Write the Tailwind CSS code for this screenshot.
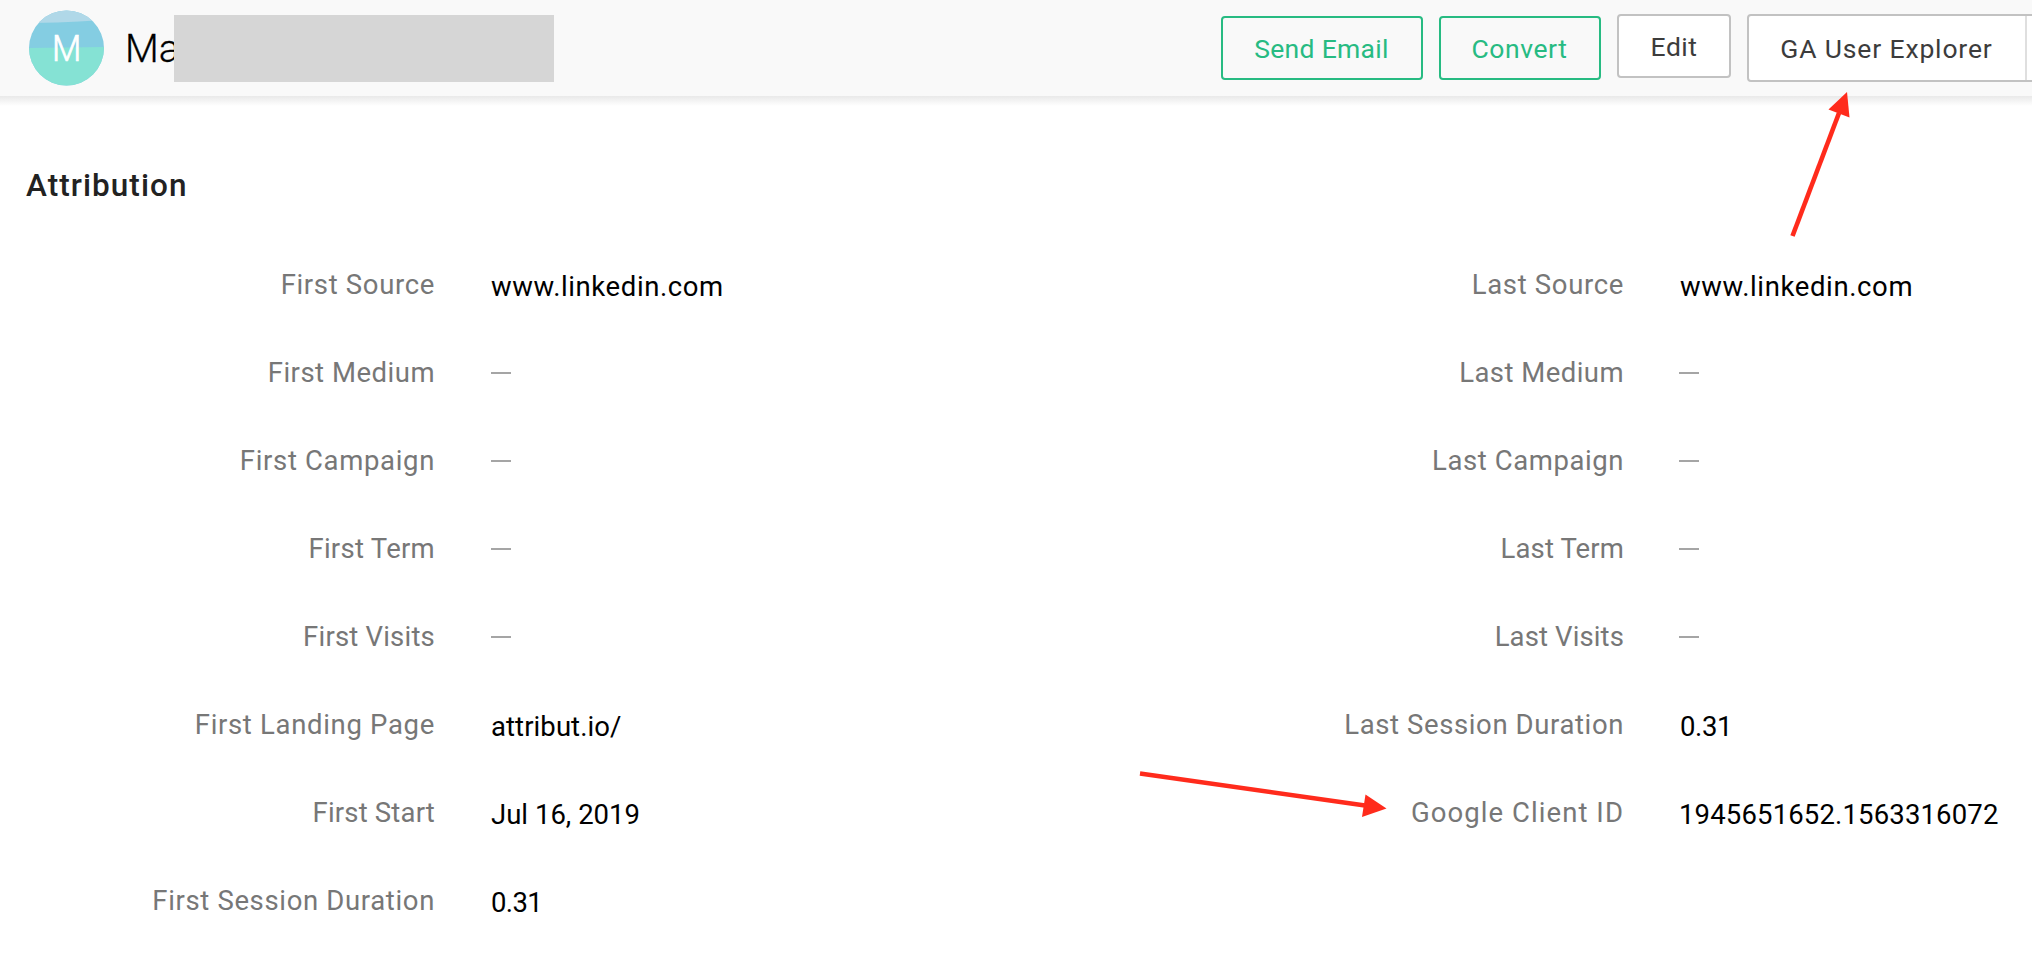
<!DOCTYPE html>
<html lang="en">
<head>
<meta charset="utf-8">
<title>Attribution</title>
<script src="https://cdn.jsdelivr.net/npm/@tailwindcss/browser@4"></script>
</head>
<body class="relative h-[963px] w-[2032px] overflow-hidden bg-white font-['Roboto','Liberation_Sans',sans-serif] text-[27.5px] text-black">

<header class="flex h-24 items-start bg-[#f9f9f9] pl-[29px]">
  <div class="relative mt-[10px] mr-px h-19 w-[75px] shrink-0">
    <svg class="h-19 w-[75px]" viewBox="0 0 75 76">
      <defs><clipPath id="disc"><circle cx="37.5" cy="38" r="37.5"/></clipPath></defs>
      <g clip-path="url(#disc)">
        <rect width="76" height="76" fill="#84cde2"/>
        <path d="M0 0H76V10L50 11.5L28 12.5L0 13Z" fill="#b0d8e8"/>
        <path d="M0 38L38 37.5L76 37V76H0Z" fill="#85e2d4"/>
      </g>
    </svg>
    <span class="absolute inset-0 flex items-center justify-center pt-[2px] text-[36px] font-light text-white [-webkit-text-stroke:0.7px_white]"><span class="scale-x-[0.94]">M</span></span>
  </div>
  <div class="mt-[15px] flex h-[67px] items-center">
    <h1 class="ml-5 w-[49px] pt-[2px] text-[39px] font-light leading-[65px] [-webkit-text-stroke:0.3px_black]">Ma</h1>
    <div class="relative h-[67px] w-[380px] bg-[#d6d6d6]"></div>
  </div>
  <div class="ml-[667px] flex shrink-0 items-start gap-4 text-[26.5px] text-[#3c3c3c]">
    <button class="mt-4 h-16 w-[202px] rounded-[4px] border-2 border-[#27bb82] pt-[2px] pr-px tracking-[0.3px] text-[#27bb82]">Send Email</button>
    <button class="mt-4 h-16 w-[162px] rounded-[4px] border-2 border-[#27bb82] pt-[2px] pr-px tracking-[0.6px] text-[#27bb82]">Convert</button>
    <button class="mt-[14px] h-16 w-[114px] rounded-[4px] border-2 border-[#c2c2c2] bg-white pt-[2px] tracking-[0.5px]">Edit</button>
    <div class="mt-[14px] flex h-17 w-[300px] rounded-[4px] border-2 border-[#c2c2c2] bg-white">
      <button class="w-[278px] border-r-2 border-[#dfdfdf] pt-[2px] pr-px whitespace-nowrap tracking-[0.85px]">GA User Explorer</button>
    </div>
  </div>
</header>
<div class="h-[10px] bg-linear-to-b from-[#e9e9e9] to-white"></div>

<main>
  <h2 class="mt-[60px] ml-[26px] h-10 text-[31.5px] leading-10 font-medium tracking-[1.05px] text-[#222]">Attribution</h2>
  <div class="mt-[34px] flex">
    <dl class="w-[1190px] leading-[90px]">
      <div class="flex h-22"><dt class="w-[435px] text-right tracking-[0.66px] text-[#777]">First Source</dt><dd class="ml-14 pt-[2px] tracking-[0.6px]">www.linkedin.com</dd></div>
      <div class="flex h-22"><dt class="w-[435px] text-right tracking-[0.5px] text-[#777]">First Medium</dt><dd class="mt-11 ml-14 h-[2px] w-5 bg-[#a5a5a5]"></dd></div>
      <div class="flex h-22"><dt class="w-[435px] text-right tracking-[0.66px] text-[#777]">First Campaign</dt><dd class="mt-11 ml-14 h-[2px] w-5 bg-[#a5a5a5]"></dd></div>
      <div class="flex h-22"><dt class="w-[435px] text-right tracking-[0.28px] text-[#777]">First Term</dt><dd class="mt-11 ml-14 h-[2px] w-5 bg-[#a5a5a5]"></dd></div>
      <div class="flex h-22"><dt class="w-[435px] text-right tracking-[0.2px] text-[#777]">First Visits</dt><dd class="mt-11 ml-14 h-[2px] w-5 bg-[#a5a5a5]"></dd></div>
      <div class="flex h-22"><dt class="w-[435px] text-right tracking-[0.68px] text-[#777]">First Landing Page</dt><dd class="ml-14 pt-[2px] tracking-[0.08px]">attribut.io/</dd></div>
      <div class="flex h-22"><dt class="w-[435px] text-right tracking-[0.18px] text-[#777]">First Start</dt><dd class="ml-14 pt-[2px] tracking-[0.02px]">Jul 16, 2019</dd></div>
      <div class="flex h-22"><dt class="w-[435px] text-right tracking-[0.65px] text-[#777]">First Session Duration</dt><dd class="ml-14 pt-[2px] tracking-[-0.6px]">0.31</dd></div>
    </dl>
    <dl class="w-[842px] leading-[90px]">
      <div class="flex h-22"><dt class="w-[434px] text-right tracking-[0.66px] text-[#777]">Last Source</dt><dd class="ml-14 pt-[2px] tracking-[0.62px]">www.linkedin.com</dd></div>
      <div class="flex h-22"><dt class="w-[434px] text-right tracking-[0.45px] text-[#777]">Last Medium</dt><dd class="mt-11 ml-[55px] h-[2px] w-5 bg-[#a5a5a5]"></dd></div>
      <div class="flex h-22"><dt class="w-[434px] text-right tracking-[0.57px] text-[#777]">Last Campaign</dt><dd class="mt-11 ml-[55px] h-[2px] w-5 bg-[#a5a5a5]"></dd></div>
      <div class="flex h-22"><dt class="w-[434px] text-right tracking-[0.12px] text-[#777]">Last Term</dt><dd class="mt-11 ml-[55px] h-[2px] w-5 bg-[#a5a5a5]"></dd></div>
      <div class="flex h-22"><dt class="w-[434px] text-right tracking-[0.12px] text-[#777]">Last Visits</dt><dd class="mt-11 ml-[55px] h-[2px] w-5 bg-[#a5a5a5]"></dd></div>
      <div class="flex h-22"><dt class="w-[434px] text-right tracking-[0.61px] text-[#777]">Last Session Duration</dt><dd class="ml-14 pt-[2px] tracking-[-0.4px]">0.31</dd></div>
      <div class="flex h-22"><dt class="w-[434px] text-right tracking-[1.06px] text-[#777]">Google Client ID</dt><dd class="ml-[55px] pt-[2px] tracking-[0.15px]">1945651652.1563316072</dd></div>
    </dl>
  </div>
</main>

<!-- callout arrows -->
<svg class="pointer-events-none absolute inset-0" width="2032" height="963" viewBox="0 0 2032 963" fill="#ff2b1c" stroke="#ff2b1c">
  <path d="M1792.5 236L1839 113" stroke-width="4.6" fill="none"/>
  <path d="M1847 92L1828.5 109.5L1849.5 117.5Z" stroke="none"/>
  <path d="M1140 773.5L1365 805.5" stroke-width="4.6" fill="none"/>
  <path d="M1386.5 808.5L1365.5 794.5L1362 817Z" stroke="none"/>
</svg>
</body>
</html>
